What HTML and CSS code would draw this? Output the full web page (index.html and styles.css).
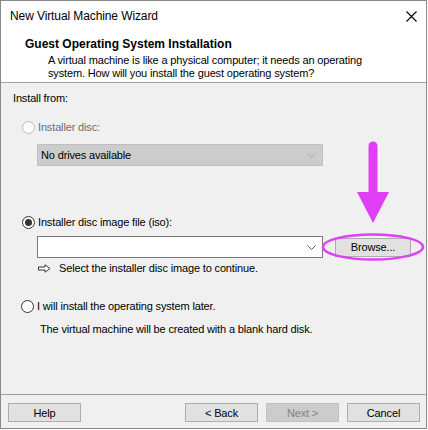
FILE: index.html
```html
<!DOCTYPE html>
<html lang="en">
<head>
  <meta charset="UTF-8">
  <meta name="viewport" content="width=device-width, initial-scale=1.0">
  <title>New Virtual Machine Wizard</title>
<link rel="stylesheet" href="styles.css">
</head>
<body>
    <div class="window">
        <div class="top">
            <div class="titlebar">
                <span class="title">New Virtual Machine Wizard</span>
                <svg class="close" width="11" height="11" viewBox="0 0 11 11">
                    <path d="M0.5 0.5L10.5 10.5M10.5 0.5L0.5 10.5" stroke="#000" stroke-width="1.1" fill="none"/>
                </svg>
            </div>
            <div class="header">
                <div class="header-title">Guest Operating System Installation</div>
                <div class="header-desc">A virtual machine is like a physical computer; it needs an operating<br>system. How will you install the guest operating system?</div>
            </div>
        </div>

        <div class="content">
            <div class="section-label">Install from:</div>

            <div class="option option-first disabled">
                <span class="radio"></span>
                <span>Installer disc:</span>
            </div>
            <div class="combo combo-disabled">
                <span>No drives available</span>
                <svg class="chevron" width="9" height="5" viewBox="0 0 9 5"><path d="M0.5 0.5L4.5 4.5L8.5 0.5" stroke="#a8a8a8" fill="none"/></svg>
            </div>

            <div class="option option-iso">
                <span class="radio checked"></span>
                <span>Installer disc image file (iso):</span>
            </div>
            <div class="file-row">
                <div class="combo">
                    <span></span>
                    <svg class="chevron" width="9" height="5" viewBox="0 0 9 5"><path d="M0.5 0.5L4.5 4.5L8.5 0.5" stroke="#555" fill="none"/></svg>
                </div>
                <button class="btn btn-browse">Browse...</button>
            </div>
            <div class="hint">
                <svg class="hint-arrow" width="13" height="9" viewBox="0 0 13 9"><path d="M0.5 3h6.5V0.8L12 4.5L7 8.2V6H0.5z" stroke="#333" fill="#fff"/></svg>
                <span>Select the installer disc image to continue.</span>
            </div>

            <div class="option option-later">
                <span class="radio"></span>
                <span>I will install the operating system later.</span>
            </div>
            <div class="note">The virtual machine will be created with a blank hard disk.</div>
        </div>

        <div class="footer">
            <button class="btn">Help</button>
            <div class="footer-right">
                <button class="btn">&lt; Back</button>
                <button class="btn" disabled>Next &gt;</button>
                <button class="btn">Cancel</button>
            </div>
        </div>

        <!-- 강조 표시 (화살표 + 타원) -->
        <svg class="annotation" width="428" height="430" viewBox="0 0 428 430">
            <line x1="373" y1="146" x2="373" y2="196" stroke="#df3ff5" stroke-width="9" stroke-linecap="round"/>
            <polygon points="357,192 389,192 373,223" fill="#df3ff5"/>
            <ellipse cx="373" cy="247" rx="50" ry="12.5" stroke="#df3ff5" stroke-width="2.5" fill="none"/>
        </svg>
    </div>
</body>
</html>
```

FILE: styles.css
```css
body {
    margin: 0;
    font-family: "Liberation Sans", Arial, sans-serif;
    font-size: 12px;
    color: #000;
    background-color: #fff;
}
.window {
    width: 427px;
    height: 429px;
    box-sizing: border-box;
    border: 1px solid #888;
    background-color: #f0f0f0;
    display: flex;
    flex-direction: column;
    position: relative;
}
.top {
    background-color: #fff;
    height: 81px;
    border-bottom: 1px solid #a0a0a0;
}
.titlebar {
    height: 30px;
    line-height: 30px;
    padding-left: 9px;
    display: flex;
    align-items: center;
    justify-content: space-between;
    letter-spacing: -0.1px;
}
.close {
    margin-right: 9px;
}
.header {
    padding-top: 6px;
}
.header-title {
    font-weight: bold;
    line-height: 15px;
    padding-left: 24px;
}
.header-desc {
    font-size: 11px;
    letter-spacing: -0.15px;
    line-height: 13px;
    margin-top: 2px;
    padding-left: 47px;
}
.content {
    flex: 1;
    padding: 8px 0 0 12px;
    font-size: 11px;
    letter-spacing: -0.15px;
}
.section-label {
    line-height: 15px;
}
.option {
    display: flex;
    align-items: center;
    line-height: 15px;
    padding-left: 9px;
}
.option-first {
    margin-top: 14px;
}
.option-iso {
    margin-top: 49px;
}
.option-later {
    margin-top: 23px;
    padding-left: 8px;
}
.radio {
    width: 13px;
    height: 13px;
    box-sizing: border-box;
    border: 1px solid #333;
    border-radius: 50%;
    background-color: #fff;
    margin-right: 3px;
    display: flex;
    justify-content: center;
    align-items: center;
}
.radio.checked::after {
    content: "";
    width: 7px;
    height: 7px;
    border-radius: 50%;
    background-color: #333;
}
.disabled {
    color: #6d6d6d;
}
.disabled .radio {
    border-color: #bcbcbc;
    background-color: #fcfcfc;
}
.combo {
    width: 286px;
    height: 22px;
    box-sizing: border-box;
    border: 1px solid #7a7a7a;
    background-color: #fff;
    display: flex;
    align-items: center;
    justify-content: space-between;
    padding: 0 6px 0 3px;
}
.combo-disabled {
    margin: 9px 0 0 24px;
    background-color: #ccc;
    border-color: #bfbfbf;
    color: #000;
}
.file-row {
    display: flex;
    align-items: center;
    margin: 6px 0 0 24px;
}
.btn {
    width: 73px;
    height: 19px;
    box-sizing: border-box;
    padding: 0;
    border: 1px solid #adadad;
    background-color: #e1e1e1;
    font-family: inherit;
    font-size: 11px;
    letter-spacing: -0.15px;
    color: #000;
}
.btn:disabled {
    background-color: #ccc;
    border-color: #bfbfbf;
    color: #838383;
}
.btn-browse {
    width: 76px;
    margin-left: 12px;
}
.hint {
    display: flex;
    align-items: center;
    line-height: 15px;
    margin: 3px 0 0 25px;
}
.hint-arrow {
    margin-right: 8px;
}
.note {
    line-height: 15px;
    margin: 8px 0 0 27px;
}
.footer {
    border-top: 1px solid #a0a0a0;
    padding: 8px 6px 0 7px;
    box-sizing: border-box;
    height: 34px;
    display: flex;
    align-items: flex-start;
    justify-content: space-between;
}
.footer-right {
    display: flex;
    gap: 8px;
}
.annotation {
    position: absolute;
    left: -1px;
    top: -1px;
    pointer-events: none;
}
```
